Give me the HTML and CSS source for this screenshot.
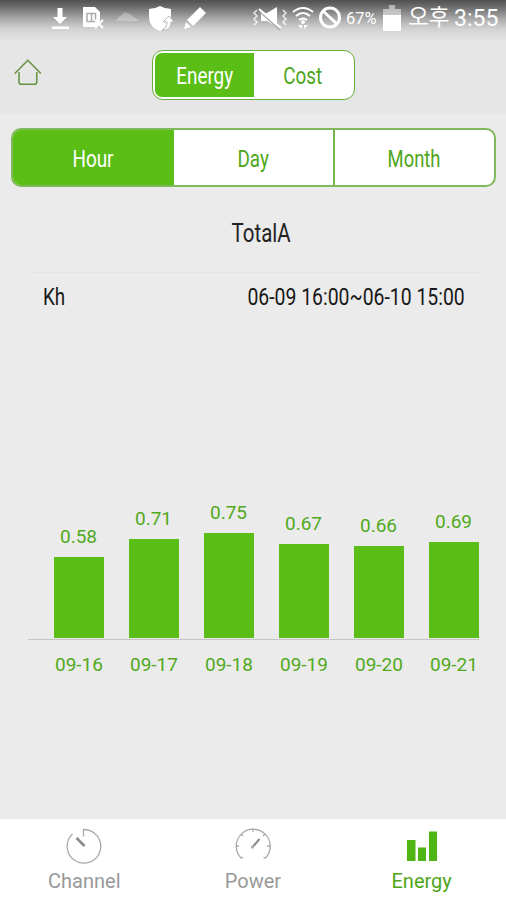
FILE: index.html
```html
<!DOCTYPE html>
<html lang="ko">
<head>
<meta charset="utf-8">
<title>Energy</title>
<link rel="stylesheet" href="styles.css">
</head>
<body>
<div class="app">
  <header class="top">
    <div class="status">
      <svg class="s-download" width="20" height="26" viewBox="0 0 20 26"><path d="M7.500 3h5v9h4.500L10 19 3 12h4.500zM2 21.500h17V24H2z"/></svg>
      <svg class="s-doc" width="24" height="26" viewBox="0 0 24 26"><path d="M1 2h12l5 5v9l-3 6H1z"/><path class="cut" d="M5 8.500h8.500v8H5zM9.500 9v8"/><path class="line" d="m13 15 8 8M21 15l-8 8"/></svg>
      <svg class="s-cloud" width="26" height="26" viewBox="0 0 26 26"><path d="M1 16 4 12 10 7l5 2 9 7z"/></svg>
      <svg class="s-shield" width="26" height="28" viewBox="0 0 26 28"><path d="M1 4q6 0 11-3 5 3 11 3v10q-2 8-11 12Q1 22 1 12z"/><path class="turn" d="M14 25q5-2 5-8h-4l6-6 5 6h-3q0 6-5 8z"/></svg>
      <svg class="s-pencil" width="25" height="26" viewBox="0 0 25 26"><path d="m17 2 6 6L10 21l-6-6zM3 17l5 5-7 2z"/></svg>
      <svg class="s-mute" width="34" height="26" viewBox="0 0 34 26"><path d="M8 8h6l10-6v20l-10-6H8z"/><path class="cut" d="m7 7 20 18"/><path class="line" d="m6 4 22 19"/><path class="line thin" d="M4 5 1 8l3 3-3 3 3 3-3 3M30 5l3 3-3 3 3 3-3 3 3 3"/></svg>
      <svg class="s-wifi" width="22" height="26" viewBox="0 0 22 26"><path class="line" d="M1 7q10-8 20 0M4 11q7-6 14 0M7 15q4-3 8 0"/><circle cx="11" cy="17" r="2"/><path d="M6 20h4v4zm6 0h4l-4 4z"/></svg>
      <svg class="s-ban" width="24" height="26" viewBox="0 0 24 26"><g class="ring"><circle cx="12" cy="12.500" r="9.500"/><path d="m5 6 14 13"/></g></svg>
      <span class="percent">67%</span>
      <svg class="s-battery" width="18" height="26" viewBox="0 0 18 26"><path class="faint" d="M6 0h6v4h6v22H0V4h6z"/><path d="M0 10h18v16H0z"/></svg>
      <span class="ampm">오후</span>
      <span class="clock">3:55</span>
    </div>
    <div class="bar">
      <svg class="home" width="28" height="28" viewBox="0 0 28 28"><path d="m.8 14.500 13-13.300 13 13.300M5 13v10q0 2.200 2.200 2.200h13.400q2.200 0 2.200-2.200V13"/></svg>
      <div class="toggle"><div class="option on"><span class="narrow">Energy</span></div><div class="option"><span class="narrow">Cost</span></div></div>
    </div>
  </header>
  <main class="main">
    <div class="tabs"><div class="tab on"><span class="narrow">Hour</span></div><div class="tab"><span class="narrow">Day</span></div><div class="tab"><span class="narrow">Month</span></div></div>
    <h1 class="title"><span class="narrow">TotalA</span></h1>
    <div class="info"><span class="narrow left">Kh</span><span class="narrow right">06-09 16:00~06-10 15:00</span></div>
    <div class="chart">
      <div class="col"><span>0.58</span><div class="fill" style="height:81px"></div></div>
      <div class="col"><span>0.71</span><div class="fill" style="height:99px"></div></div>
      <div class="col"><span>0.75</span><div class="fill" style="height:105px"></div></div>
      <div class="col"><span>0.67</span><div class="fill" style="height:94px"></div></div>
      <div class="col"><span>0.66</span><div class="fill" style="height:92px"></div></div>
      <div class="col"><span>0.69</span><div class="fill" style="height:96px"></div></div>
    </div>
    <div class="dates"><span>09-16</span><span>09-17</span><span>09-18</span><span>09-19</span><span>09-20</span><span>09-21</span></div>
  </main>
  <nav class="nav">
    <div class="item"><svg width="36" height="36" viewBox="0 0 36 36"><path d="M17.500 8.500V1.500a16.800 16.800 0 1 1-11 4.500"/><path class="needle" d="m10.500 10 8 8"/></svg><span>Channel</span></div>
    <div class="item"><svg width="36" height="36" viewBox="0 0 36 36"><path d="M8 29.500l-2 .5A17 17 0 1 1 30.500 30L28.500 29.500M18 1v3M1 18h3M32 18h3M6 6l2 2M30 6l-2 2"/><path class="pointer" d="m18.500 18 6-7"/><circle cx="17.500" cy="19" r="1"/></svg><span>Power</span></div>
    <div class="item active"><svg width="36" height="36" viewBox="0 0 36 36"><path d="M3 12h8.500v21H3zM14 19.500h8V33h-8zM25 3.500h8V33h-8z"/></svg><span>Energy</span></div>
  </nav>
</div>
</body>
</html>
```
FILE: styles.css
```css
* { box-sizing: border-box; }
body { margin: 0; font-family: Roboto, "Noto Sans CJK KR", sans-serif; }
.app { width: 506px; height: 900px; display: flex; flex-direction: column; overflow: hidden; background: #ebebeb; }
.top { height: 114px; background: linear-gradient(#505050 0, #777 9px, #aaa 19px, #d2d2d2 29px, #e6e6e6 42px); }
.status { height: 40px; display: flex; align-items: flex-start; padding: 5px 0 0 50px; color: #fff; white-space: nowrap; }
.status svg { fill: #fff; flex: none; }
.status span { flex: none; }
.status .cut { fill: none; stroke: #aaa; stroke-width: 1.5; }
.status .line { fill: none; stroke: #fff; stroke-width: 2; }
.status .thin { stroke-width: 1.5; opacity: .8; }
.status .ring { fill: none; stroke: #fff; stroke-width: 3; }
.status .turn { stroke: #bbb; stroke-width: 1; }
.status .faint { opacity: .5; }
.s-doc { margin-left: 12px; }
.s-cloud { margin-left: 9px; opacity: .3; }
.s-shield { margin-left: 7px; }
.s-pencil { margin-left: 9px; }
.s-mute { margin-left: 45px; }
.s-wifi { margin-left: 5px; }
.s-ban { margin-left: 4px; }
.percent { width: 37px; margin-left: 4px; font-size: 16.5px; line-height: 28px; }
.ampm { width: 46px; margin-left: 7px; font-size: 22.5px; line-height: 25px; }
.clock { font-size: 23px; line-height: 27px; }
.bar { display: grid; grid-template-columns: 152px 203px 1fr; padding-top: 10px; }
.home { margin: 9px 0 0 14px; fill: none; stroke: #66913f; stroke-width: 1.5; }
.toggle { height: 50px; display: flex; border: 1.5px solid #69ae3c; border-radius: 11px; background: #fff; padding: 2px; font-size: 23px; }
.option { flex: 1; display: flex; align-items: center; justify-content: center; padding: 2px 0 0 0; color: #4fa51a; }
.option.on { padding-left: 1px; background: #5abe16; color: #fff; border-radius: 7px 0 0 7px; }
.narrow { display: inline-block; transform: scaleX(.82); white-space: nowrap; }
.main { flex: 1; padding-top: 14px; }
.tabs { width: 485px; height: 59px; margin-left: 11px; display: grid; grid-template-columns: 161px 161px 1fr; border: 2px solid #80b95c; border-radius: 10px; overflow: hidden; background: #fff; color: #4fa51a; font-size: 23px; }
.tab { display: flex; align-items: center; justify-content: center; padding-top: 3px; }
.tab + .tab { border-right: 2px solid #76b54c; }
.tab:last-child { border-right: 0; }
.tab:last-child .narrow { transform: scaleX(.8); }
.tab.on { background: #5abe16; color: #fff; padding-right: 2px; }
.title { margin: 0; height: 85px; padding: 31px 0 0 16px; text-align: center; font-size: 25px; line-height: 32px; font-weight: 400; color: #222; }
.info { margin: 0 26px 0 28px; height: 50px; display: flex; justify-content: space-between; padding: 0 15px; border-top: 1px solid #e5e5e5; font-size: 23px; line-height: 49px; color: #181818; }
.left { transform-origin: left; }
.right { transform: scaleX(.843); transform-origin: right; }
.chart { margin: 0 27px 0 28px; height: 318px; padding: 0 0 1px 25.5px; display: flex; align-items: flex-end; gap: 25px; border-bottom: 1px solid #c4c4c4; }
.col { width: 50px; flex: none; display: flex; flex-direction: column; align-items: center; color: #51a91c; font-size: 19px; }
.col span { line-height: 22px; margin-bottom: 9px; }
.fill { width: 50px; background: #5abe16; }
.dates { display: grid; grid-template-columns: repeat(6, 75px); margin: 13px 0 0 41.5px; text-align: center; color: #51a91c; font-size: 19px; line-height: 24px; }
.nav { height: 81px; background: #fff; display: grid; grid-template-columns: repeat(3, 1fr); color: #999; font-size: 20px; }
.item { display: flex; flex-direction: column; align-items: center; padding-top: 9px; }
.item svg { fill: none; stroke: #aaa; stroke-width: 1.3; }
.item span { line-height: 25px; margin-top: 5px; }
.item .needle { stroke: #888; stroke-width: 2.5; }
.item .pointer { stroke: #888; stroke-width: 2; }
.item.active { color: #4fa51a; }
.item.active svg { fill: #4eb512; stroke: none; }
```
